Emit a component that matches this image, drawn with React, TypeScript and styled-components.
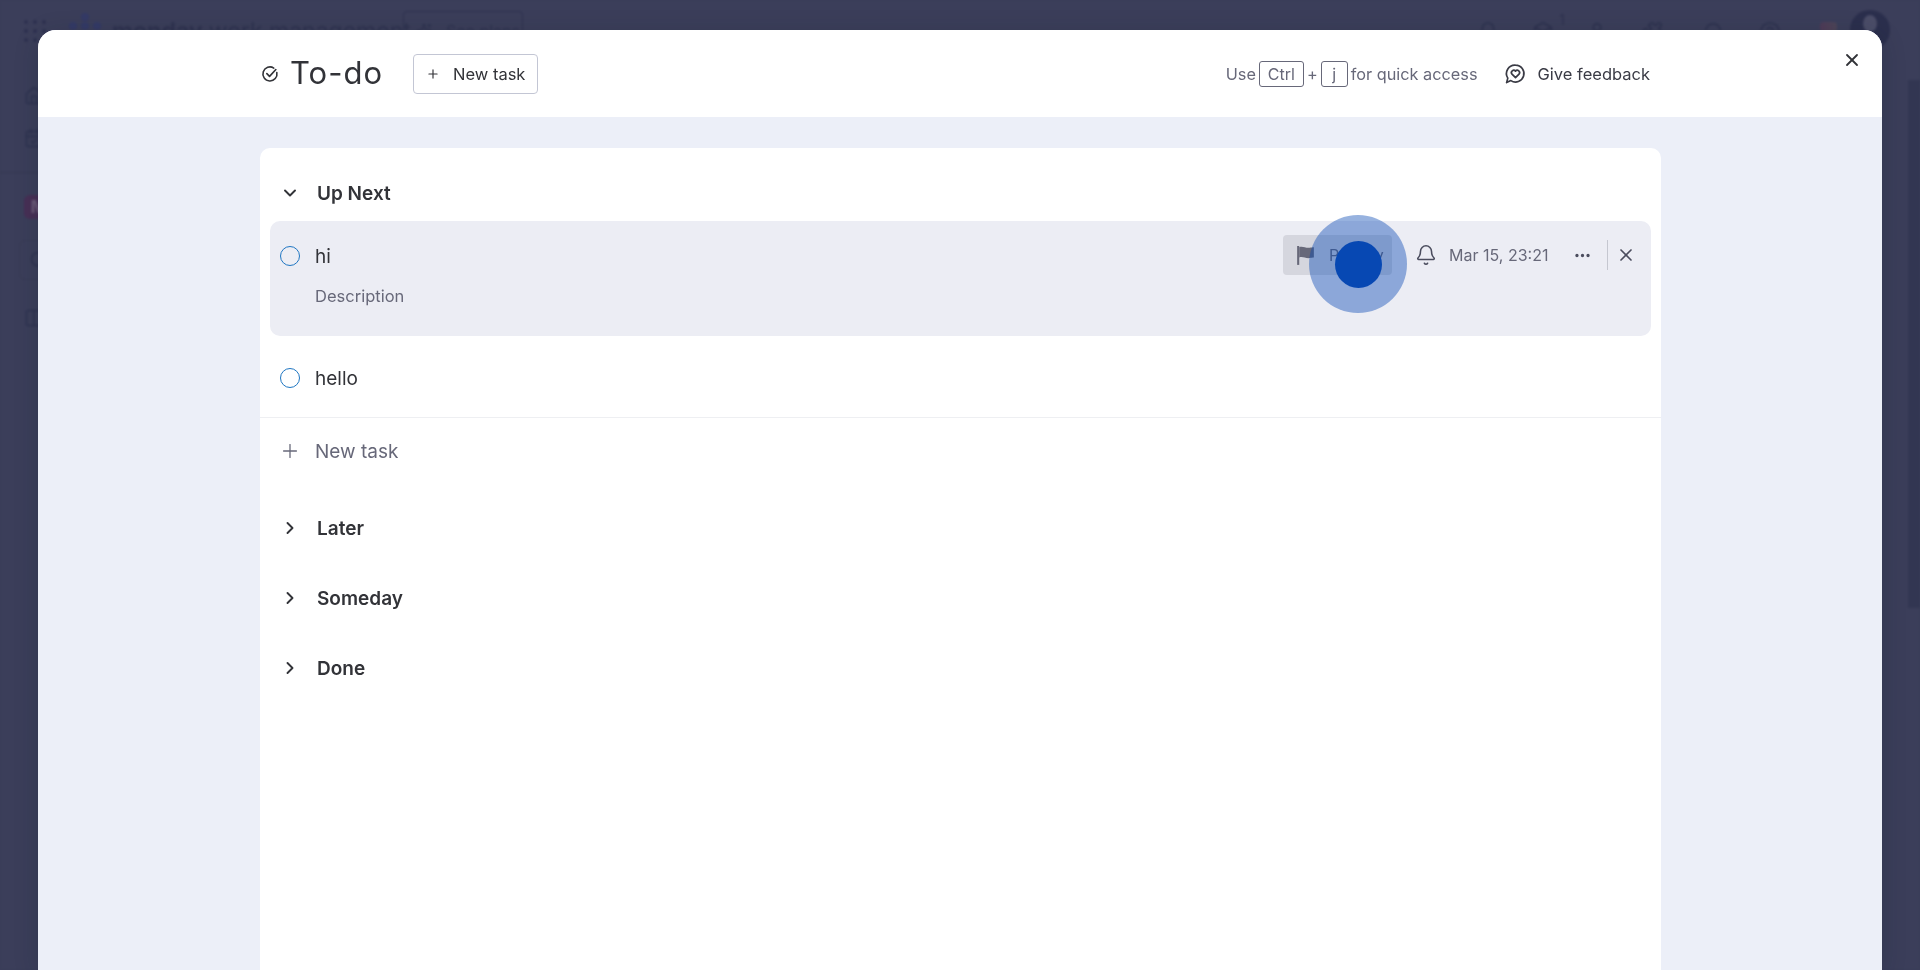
import React from "react";
import styled, { createGlobalStyle } from "styled-components";
import { Bell, Box, CalendarCheck, ChevronDown, ChevronRight, CircleHelp, Home, MoreHorizontal, Plus, Puzzle, Search, Sparkles, User, X, Columns2 } from "lucide-react";

const Global = createGlobalStyle`
  html, body { margin: 0; height: 100%; overflow: hidden; background: #3a3d59; }
  #root { height: 100%; }
  * { box-sizing: border-box; }
  body { font-family: Inter, "Liberation Sans", sans-serif; color: #323338; }
`;

const Shell = styled.div`
  height: 970px;
  display: flex;
  flex-direction: column;
  background: #3b3e5a;
  color: #2f3350;
  filter: blur(1px);
  overflow: hidden;
`;
const TopBar = styled.div`
  display: flex;
  align-items: flex-start;
  height: 60px;
  padding-left: 24px;
`;
const Dots = styled.div`
  display: grid;
  grid-template-columns: repeat(3, 4px);
  gap: 5px;
  margin-top: 20px;
  span { width: 4px; height: 4px; border-radius: 50%; background: #2d3150; }
`;
const LogoMark = styled.svg`
  flex: none;
  width: 36px;
  height: 24px;
  margin: 12px 0 0 22px;
  color: #343a66;
`;
const Brand = styled.div`
  flex: none;
  display: flex;
  align-items: baseline;
  width: 275px;
  margin: 16px 0 0 8px;
  font-size: 23px;
  line-height: 30px;
  color: #2f3350;
  white-space: nowrap;
  b { font-weight: 700; margin-right: 6px; }
`;
const Plans = styled.div`
  flex: none;
  display: flex;
  align-items: center;
  gap: 14px;
  width: 120px;
  height: 40px;
  margin: 11px 0 0 16px;
  padding-left: 12px;
  border: 1px solid #2f3350;
  border-radius: 4px;
  font-size: 16px;
  white-space: nowrap;
`;
const TopIcons = styled.div`
  display: flex;
  align-items: flex-start;
  margin-left: auto;
  padding-top: 21px;
  padding-right: 30px;
`;
const TopSlot = styled.div<{ $w: number }>`
  position: relative;
  display: flex;
  justify-content: center;
  width: ${(p) => p.$w}px;
`;
const Badge = styled.span`
  position: absolute;
  top: -10px;
  right: 5px;
  font-size: 14px;
`;
const ColorMark = styled.div`
  width: 17px;
  height: 10px;
  margin: 1px 0 0 0;
  background: linear-gradient(90deg, #4f3a58, #4d4558);
  border-radius: 4px;
`;
const Avatar = styled.div`
  flex: none;
  display: flex;
  justify-content: center;
  width: 40px;
  height: 40px;
  margin: -11px 0 0 -14px;
  padding-top: 5px;
  border-radius: 50%;
  background: #2b2f4d;
  span { width: 14px; height: 17px; border-radius: 50%; background: #4b4d68; }
`;
const Lower = styled.div`
  flex: 1;
  display: flex;
`;
const Sidebar = styled.div`
  width: 70px;
  display: flex;
  flex-direction: column;
  padding: 26px 0 0 24px;
`;
const SideRule = styled.div`
  height: 1px;
  margin: 24px 0 22px -24px;
  width: 60px;
  background: #343751;
`;
const WorkspaceBadge = styled.div`
  width: 30px;
  height: 24px;
  border-radius: 6px;
  background: #472f55;
  color: #6c5a78;
  font: 700 18px/24px Inter, sans-serif;
  text-align: center;
`;
const SearchBox = styled.div`
  display: flex;
  align-items: center;
  width: 40px;
  height: 40px;
  margin: 21px 0 0 -5px;
  padding-left: 9px;
  border: 1px solid #383b55;
  border-radius: 6px;
`;
const SideIcon = styled.div<{ $gap: number }>`
  height: 20px;
  margin-top: ${(p) => p.$gap}px;
`;
const RightPanel = styled.div`
  margin-left: auto;
  width: 12px;
  height: 528px;
  margin-top: 20px;
  background: #323652;
`;

const Modal = styled.div`
  position: fixed;
  left: 38px;
  right: 38px;
  top: 30px;
  bottom: 0;
  display: flex;
  flex-direction: column;
  background: #eceff8;
  border-radius: 18px 18px 0 0;
  overflow: hidden;
  box-shadow: 0 4px 24px rgba(20, 30, 40, 0.2);
`;
const Header = styled.header`
  flex: none;
  height: 87px;
  display: flex;
  align-items: center;
  padding: 0 232px 0 223px;
  background: #fff;
`;
const TitleIcon = styled.svg`
  flex: none;
  width: 18px;
  height: 18px;
  color: #323338;
`;
const Title = styled.h1`
  margin: -2px 0 0 11px;
  font-size: 31px;
  line-height: 40px;
  font-weight: 400;
  letter-spacing: 1px;
  color: #323338;
  white-space: nowrap;
`;
const NewTaskButton = styled.button`
  display: flex;
  align-items: center;
  width: 125px;
  height: 40px;
  margin-left: 30px;
  padding: 0 0 0 12px;
  gap: 13px;
  background: #fff;
  border: 1px solid #c3c6d4;
  border-radius: 4px;
  font: 400 16.5px Inter, sans-serif;
  color: #323338;
  white-space: nowrap;
`;
const Shortcut = styled.div`
  display: flex;
  align-items: center;
  margin-left: auto;
  font-size: 16.3px;
  color: #676879;
  white-space: nowrap;
`;
const Key = styled.kbd<{ $w: number }>`
  display: flex;
  align-items: center;
  justify-content: center;
  width: ${(p) => p.$w}px;
  height: 26px;
  margin: 0 3px;
  border: 1px solid #676879;
  border-radius: 3px;
  font: 400 16px Inter, sans-serif;
`;
const Feedback = styled.div`
  display: flex;
  align-items: center;
  gap: 11px;
  margin-left: 25px;
  font-size: 16.5px;
  color: #3a3b45;
  white-space: nowrap;
`;
const FeedbackIcon = styled.svg`
  flex: none;
  width: 24px;
  height: 24px;
`;
const CloseButton = styled.button`
  position: absolute;
  top: 18px;
  right: 18px;
  display: flex;
  width: 24px;
  height: 24px;
  align-items: center;
  justify-content: center;
  padding: 0;
  border: 0;
  background: none;
  color: #323338;
`;
const Body = styled.main`
  flex: 1;
  min-height: 0;
  padding: 31px 221px 0 222px;
`;
const Card = styled.section`
  height: 100%;
  padding-top: 25px;
  background: #fff;
  border-radius: 10px 10px 0 0;
`;
const SectionHead = styled.div<{ $top?: number }>`
  display: flex;
  align-items: center;
  gap: 17px;
  height: 40px;
  margin-top: ${(p) => p.$top ?? 0}px;
  padding-left: 20px;
  font-size: 19px;
  font-weight: 600;
  color: #323338;
  svg { flex: none; }
`;
const ActiveTask = styled.div`
  display: flex;
  flex-direction: column;
  height: 115px;
  margin: 8px 10px 0 10px;
  padding: 18px 0 0 10px;
  background: #ecedf4;
  border-radius: 10px;
`;
const TaskLine = styled.div`
  display: flex;
  align-items: center;
  height: 34px;
`;
const Check = styled.span`
  flex: none;
  width: 20px;
  height: 20px;
  margin-right: 15px;
  border: 1.5px solid #1f76c2;
  border-radius: 50%;
`;
const TaskName = styled.span`
  font-size: 19px;
  color: #323338;
`;
const Description = styled.div`
  margin: 12px 0 0 35px;
  font-size: 16.5px;
  line-height: 22px;
  color: #676879;
`;
const Actions = styled.div`
  display: flex;
  align-items: center;
  margin-top: -2px;
  margin-left: auto;
  padding-right: 13px;
  color: #4b4d5e;
`;
const Priority = styled.div`
  display: flex;
  align-items: center;
  gap: 12px;
  width: 109px;
  height: 40px;
  padding-left: 11px;
  background: #d5d6de;
  border-radius: 4px;
  font-size: 16px;
  color: #676879;
`;
const FlagIcon = styled.svg`
  flex: none;
  width: 23px;
  height: 23px;
`;
const ActionIcon = styled.span<{ $left: number }>`
  display: flex;
  width: 24px;
  height: 24px;
  align-items: center;
  justify-content: center;
  margin-left: ${(p) => p.$left}px;
`;
const DateText = styled.span`
  margin-left: 11px;
  width: 98px;
  font-size: 16px;
  color: #676879;
  white-space: nowrap;
`;
const Rule = styled.span`
  width: 1px;
  height: 30px;
  margin-left: 13px;
  background: #c5c7d0;
`;
const PlainTask = styled.div`
  display: flex;
  align-items: center;
  height: 82px;
  padding: 3px 0 0 20px;
  border-bottom: 1px solid #eeeff2;
`;
const NewTaskRow = styled.div`
  display: flex;
  align-items: center;
  gap: 14px;
  height: 66px;
  padding-left: 19px;
  font-size: 19px;
  color: #676879;
  svg { flex: none; }
`;
const ClickHalo = styled.div`
  position: fixed;
  left: 1309px;
  top: 215px;
  width: 98px;
  height: 98px;
  display: flex;
  align-items: center;
  justify-content: center;
  border-radius: 50%;
  background: rgba(7, 72, 179, 0.42);
`;
const ClickDot = styled.div`
  width: 47px;
  height: 47px;
  border-radius: 50%;
  background: #0748b3;
`;

const closed = ["Later", "Someday", "Done"];

export default function App() {
  return (
    <>
      <Global />
      <Shell aria-hidden>
        <TopBar>
          <Dots>{Array.from({ length: 9 }, (_, i) => <span key={i} />)}</Dots>
          <LogoMark viewBox="0 0 36 24" fill="currentColor">
            <circle cx="17" cy="5" r="4" />
            <circle cx="5" cy="14" r="4" />
            <circle cx="17" cy="14" r="4" />
            <circle cx="29" cy="14" r="4" />
          </LogoMark>
          <Brand><b>monday</b> work management</Brand>
          <Plans><Sparkles size={16} />See plans</Plans>
          <TopIcons>
            <TopSlot $w={56}><Bell size={22} /></TopSlot>
            <TopSlot $w={54}><Box size={22} /><Badge>1</Badge></TopSlot>
            <TopSlot $w={54}><User size={22} /></TopSlot>
            <TopSlot $w={56}><Puzzle size={22} /></TopSlot>
            <TopSlot $w={68}><Search size={22} /></TopSlot>
            <TopSlot $w={44}><CircleHelp size={22} /></TopSlot>
            <TopSlot $w={72}><ColorMark /></TopSlot>
            <Avatar><span /></Avatar>
          </TopIcons>
        </TopBar>
        <Lower>
          <Sidebar>
            <Home size={20} />
            <SideIcon $gap={22}><CalendarCheck size={20} /></SideIcon>
            <SideRule />
            <WorkspaceBadge>M</WorkspaceBadge>
            <SearchBox><Search size={20} /></SearchBox>
            <SideIcon $gap={28}><Columns2 size={20} /></SideIcon>
          </Sidebar>
          <RightPanel />
        </Lower>
      </Shell>
      <Modal>
        <Header>
          <TitleIcon viewBox="0 0 20 20" fill="none" stroke="currentColor" strokeWidth="1.8" strokeLinecap="round" strokeLinejoin="round">
            <path d="M17.6 8.4A7.8 7.8 0 1 1 14.2 3.4" />
            <path d="M6.5 9.6l3 3 7-7.6" />
          </TitleIcon>
          <Title>To-do</Title>
          <NewTaskButton><Plus size={14} strokeWidth={2} />New task</NewTaskButton>
          <Shortcut>Use<Key $w={45}>Ctrl</Key>+<Key $w={27}>j</Key>for quick access</Shortcut>
          <Feedback>
            <FeedbackIcon viewBox="0 0 24 24" fill="none" stroke="currentColor" strokeWidth="1.7" strokeLinecap="round" strokeLinejoin="round">
              <path d="M12.5 3.2a8.4 8.4 0 1 1-4.6 15.4L3.6 20.6l1.2-4.5A8.4 8.4 0 0 1 12.5 3.2z" />
              <path d="M12.5 15.6l-3.500-3.500a2.300 2.300 0 0 1 3.500-3 2.300 2.300 0 0 1 3.500 3z" />
            </FeedbackIcon>
            Give feedback
          </Feedback>
        </Header>
        <CloseButton aria-label="Close"><X size={20} strokeWidth={2.2} /></CloseButton>
        <Body>
          <Card>
            <SectionHead><ChevronDown size={20} strokeWidth={2.3} />Up Next</SectionHead>
            <ActiveTask>
              <TaskLine>
                <Check />
                <TaskName>hi</TaskName>
                <Actions>
                  <Priority>
                    <FlagIcon viewBox="0 0 22 22" fill="currentColor">
                      <path d="M3 2h2v18H3z" />
                      <path d="M5 3c3-1.500 6 1 10 .5 1.500-.2 3-.5 4-.5v10c-1 0-2.500.3-4 .5-4 .5-7-2-10-.5z" />
                    </FlagIcon>
                    Priority
                  </Priority>
                  <ActionIcon $left={22}><Bell size={22} strokeWidth={1.7} /></ActionIcon>
                  <DateText>Mar 15, 23:21</DateText>
                  <ActionIcon $left={23}><MoreHorizontal size={19} strokeWidth={2.2} /></ActionIcon>
                  <Rule />
                  <ActionIcon $left={6}><X size={20} strokeWidth={2} /></ActionIcon>
                </Actions>
              </TaskLine>
              <Description>Description</Description>
            </ActiveTask>
            <PlainTask>
              <Check />
              <TaskName>hello</TaskName>
            </PlainTask>
            <NewTaskRow><Plus size={22} strokeWidth={1.4} />New task</NewTaskRow>
            {closed.map((name, i) => (
              <SectionHead key={name} $top={i === 0 ? 24 : 30}>
                <ChevronRight size={20} strokeWidth={2.3} />
                {name}
              </SectionHead>
            ))}
          </Card>
        </Body>
      </Modal>
      <ClickHalo><ClickDot /></ClickHalo>
    </>
  );
}
